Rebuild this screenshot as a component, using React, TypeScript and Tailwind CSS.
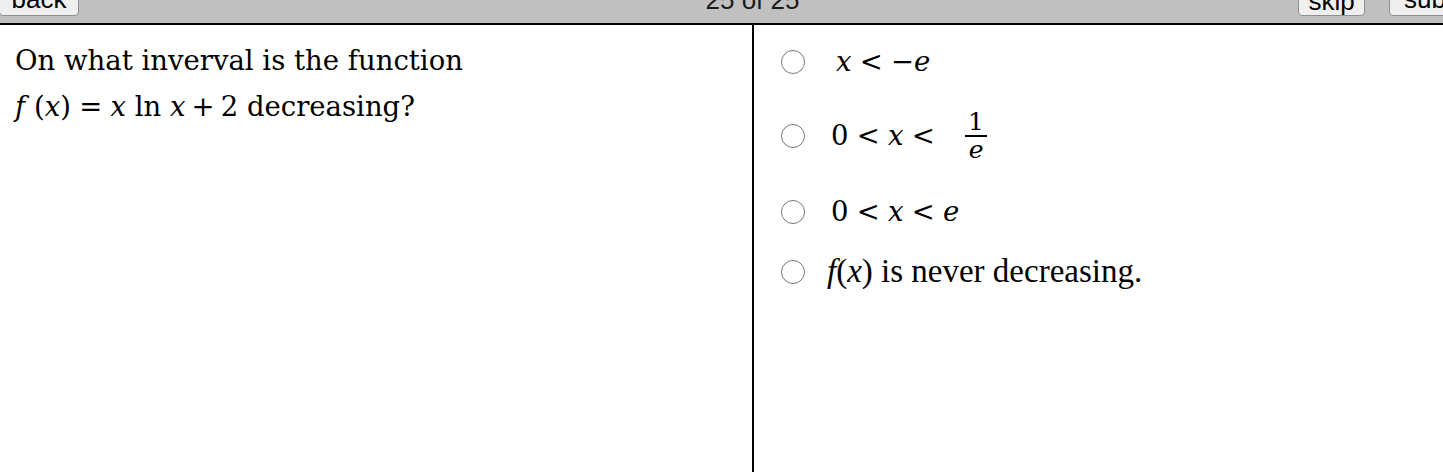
const cm = { fontFamily: '"DejaVu Serif", "Liberation Serif", serif' };
const times = { fontFamily: '"Liberation Serif", "Times New Roman", serif' };

function Radio() {
  return <div className="w-[24px] h-[24px] rounded-full border-[1.5px] border-[#777] bg-white shrink-0" />;
}

function Mi({ children }: { children: React.ReactNode }) {
  return <span className="italic">{children}</span>;
}

function Rel({ children }: { children: React.ReactNode }) {
  return <span className="mx-[0.3em]">{children}</span>;
}

export default function App() {
  return (
    <div className="w-[1443px] h-[472px] overflow-hidden bg-white" style={cm}>
      <div
        className="h-[25px] bg-[#c0c0c0] border-b-2 border-black flex items-end overflow-hidden"
        style={{ fontFamily: '"Liberation Sans", Arial, sans-serif' }}
      >
        <button className="w-[80px] h-[40px] mb-[7px] bg-[#efefef] border border-[#8f8f8f] rounded-[4px] text-[26px] leading-none flex items-end justify-center pb-[3px] -ml-[1px]">
          back
        </button>
        <div className="flex-1 flex justify-center pl-[128px] pb-[10px]">
          <span className="text-[26px] leading-none text-[#1a1a1a]">25 of 25</span>
        </div>
        <button className="w-[67px] h-[40px] mb-[7px] bg-[#efefef] border border-[#8f8f8f] rounded-[4px] text-[26px] leading-none flex items-end justify-center pb-[1px] mr-[24px]">
          skip
        </button>
        <button className="w-[70px] h-[40px] mb-[7px] bg-[#efefef] border border-[#8f8f8f] rounded-[4px] text-[26px] leading-none flex items-end justify-start pl-[14px] pb-[3px] -mr-[16px]">
          submit
        </button>
      </div>
      <div className="flex h-[447px]">
        <div className="w-[754px] border-r-2 border-black pl-[15px] pt-[12px] text-[27.5px] leading-[46px] text-black">
          <div>On what inverval is the function</div>
          <div>
            <Mi>f</Mi> (<Mi>x</Mi>)<Rel>=</Rel><Mi>x</Mi> ln <Mi>x</Mi>
            <span className="mx-[0.22em]">+</span>2 decreasing?
          </div>
        </div>
        <div className="flex-1 pl-[27px] pt-[22px] text-[27.5px] text-black">
          <div className="h-[30px] flex items-center gap-[31px]">
            <Radio />
            <span>
              <Mi>x</Mi>
              <Rel>&lt;</Rel>−<Mi>e</Mi>
            </span>
          </div>
          <div className="h-[54px] mt-[32px] flex items-center gap-[26px]">
            <Radio />
            <span className="flex items-center gap-[22px]">
              <span>
                0<Rel>&lt;</Rel>
                <Mi>x</Mi>
                <Rel>&lt;</Rel>
              </span>
              <span className="flex flex-col items-center text-[25px] leading-[26px]">
                <span className="border-b-2 border-black px-[3px]">1</span>
                <span className="italic">e</span>
              </span>
            </span>
          </div>
          <div className="h-[30px] mt-[34px] flex items-center gap-[26px]">
            <Radio />
            <span>
              0<Rel>&lt;</Rel>
              <Mi>x</Mi>
              <Rel>&lt;</Rel>
              <Mi>e</Mi>
            </span>
          </div>
          <div className="h-[30px] mt-[30px] flex items-center gap-[22px]" style={times}>
            <Radio />
            <span className="text-[33px]">
              <Mi>f</Mi>(<Mi>x</Mi>) is never decreasing.
            </span>
          </div>
        </div>
      </div>
    </div>
  );
}
